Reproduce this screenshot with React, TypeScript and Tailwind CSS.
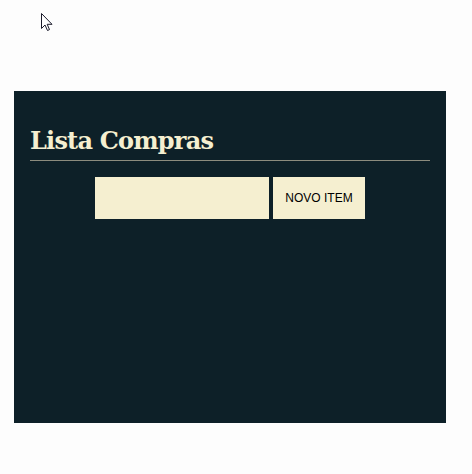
export default function App() {
  return (
    <div className="relative min-h-screen bg-[#fdfdfd] pt-[91px] px-[14px]">
      {/* mouse pointer left in the capture */}
      <svg className="absolute left-[41px] top-[13px]" width="12" height="19" viewBox="0 0 12 19">
        <path d="M0.5 0.5 L0.5 15.5 L4 12 L6.5 17.5 L8.5 16.6 L6.2 11.3 L11 11.3 Z" fill="#fff" stroke="#1a1a2a" strokeWidth="1" strokeLinejoin="miter" />
      </svg>
      <div className="w-[432px] h-[332px] bg-[#0d2028] px-4 pt-9">
        <h1 className="font-['DejaVu_Serif',serif] font-bold text-[24px] leading-[28px] text-[#f5efd0] tracking-[-0.8px] pb-[5px] border-b border-[#8c8c7e]">
          Lista Compras
        </h1>
        <div className="flex justify-center gap-1 mt-4">
          <input className="w-[174px] h-[42px] bg-[#f5efd0] outline-none px-2 text-sm" />
          <button className="w-[92px] h-[42px] bg-[#f5efd0] text-black text-[12px] font-['Liberation_Sans',Arial,sans-serif]">
            NOVO ITEM
          </button>
        </div>
      </div>
    </div>
  )
}
